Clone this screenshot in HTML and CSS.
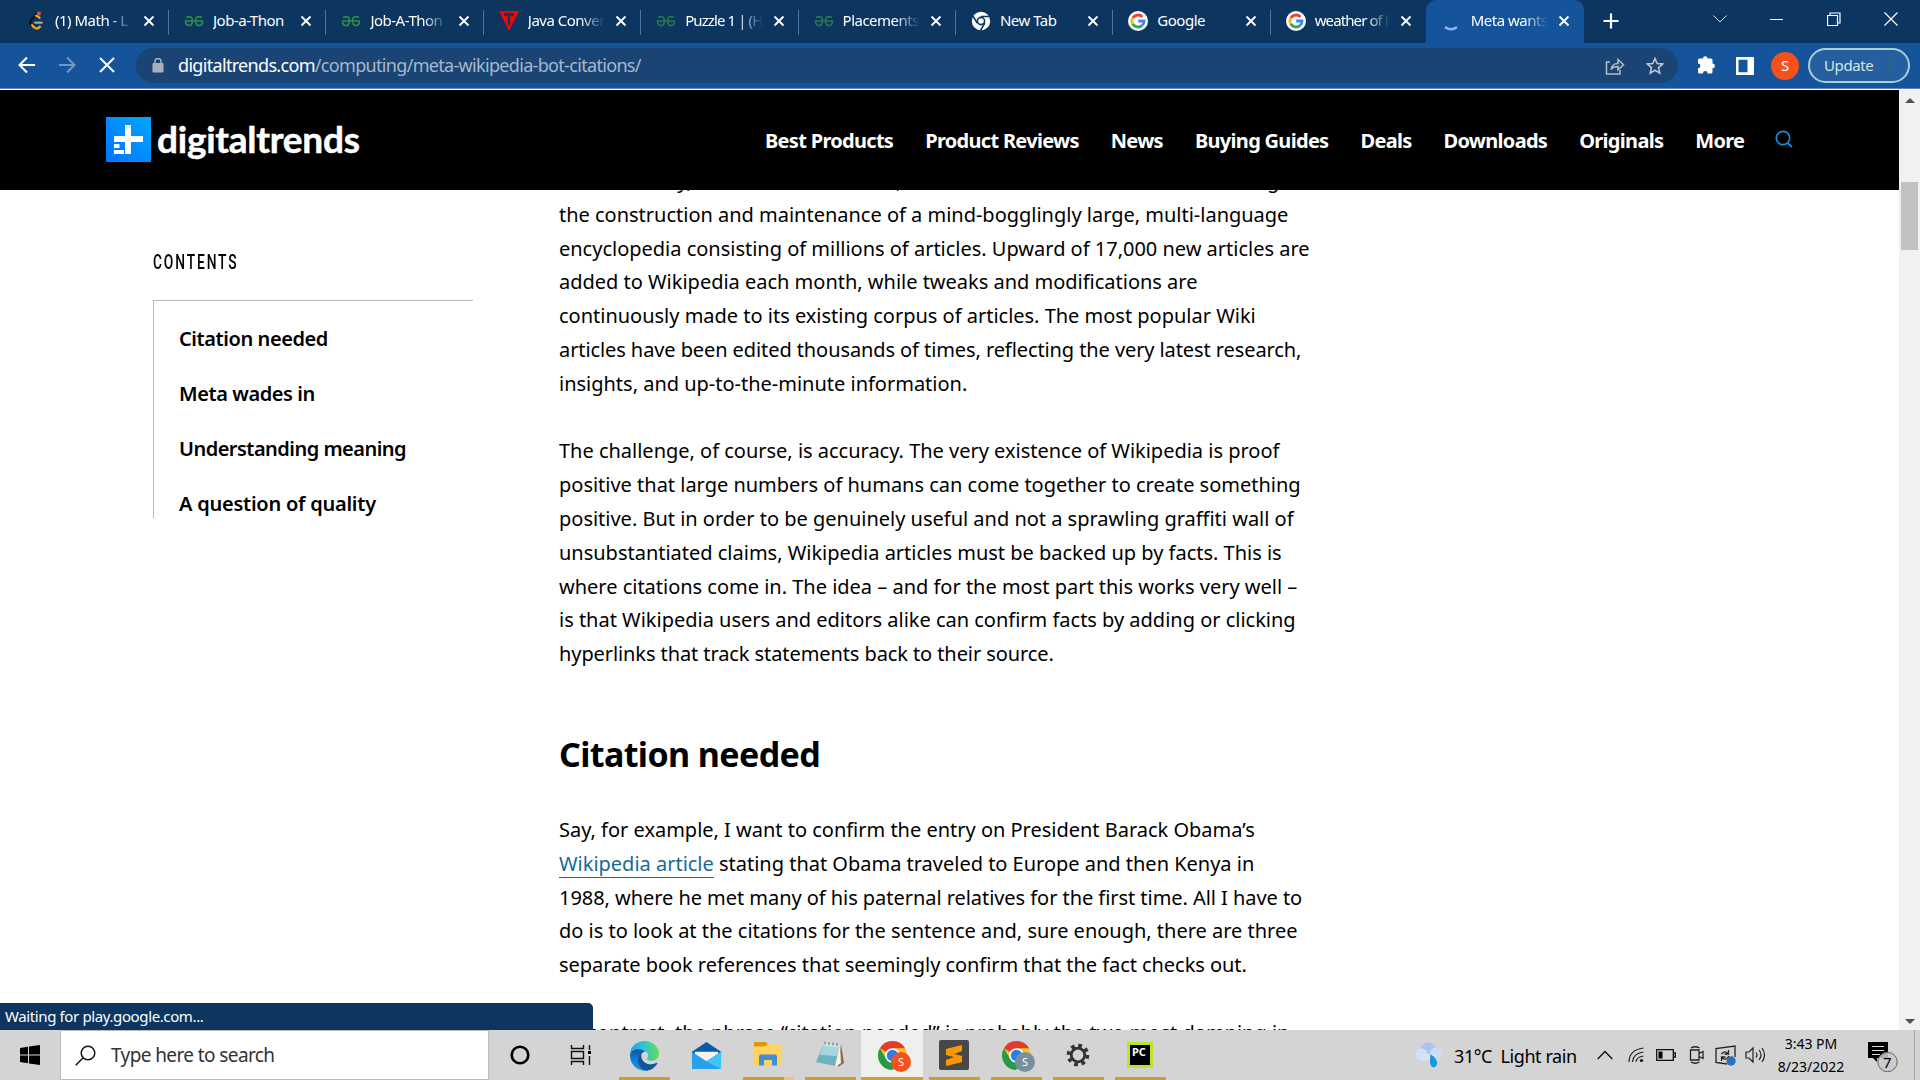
FILE: index.html
```html
<!DOCTYPE html>
<html lang="en">
<head>
<meta charset="utf-8">
<title>Meta wants</title>
<link rel="stylesheet" href="styles.css">
</head>
<body>
<svg width="0" height="0" class="defs" aria-hidden="true">
  <defs>
    <symbol id="close" viewBox="0 0 12 12"><path d="M1.500 1.500l9 9M10.500 1.500l-9 9" stroke="#fff" stroke-width="1.900" fill="none"/></symbol>
    <symbol id="gfg" viewBox="0 0 20 12"><path d="M1 6h18M2 2.600Q8.500-.5 8.500 6 8 11 4.500 10.500 1.500 10 1.500 6M18 2.600Q11.500-.5 11.500 6 12 11 15.500 10.500 18.500 10 18.500 6" stroke="#2f8d46" stroke-width="1.700" fill="none"/></symbol>
    <symbol id="google" viewBox="0 0 20 20"><circle cx="10" cy="10" r="10" fill="#fff"/><g fill="none" stroke-width="2.900"><path d="M14.300 5.900A6 6 0 0 0 4.800 7" stroke="#ea4335"/><path d="M4.800 7a6 6 0 0 0 0 6" stroke="#fbbc05"/><path d="M4.800 13a6 6 0 0 0 9.200 1.500" stroke="#34a853"/><path d="M14 14.500A6 6 0 0 0 16 10H10.200" stroke="#4285f4"/></g></symbol>
    <symbol id="chrome" viewBox="0 0 32 32"><circle cx="16" cy="16" r="15" fill="#fbc02d"/><path d="M16 16L3 8.500A15 15 0 0 1 29 8.500H16z" fill="#e33b2e"/><path d="M16 16L9.500 19.700 3 8.500A15 15 0 0 0 15.500 31L22.500 19.800z" fill="#249b48"/><circle cx="16" cy="16" r="7.600" fill="#fff"/><circle cx="16" cy="16" r="5.900" fill="#2f7de1"/></symbol>
  </defs>
</svg>

<div class="screen">
  <header class="tabs">
    <div class="tab first"><svg class="fav" viewBox="0 0 20 24"><path d="M12 2L4 11q-2 3 0 6l2 2" stroke="#111" stroke-width="2.600" fill="none"/><path d="M9 6q3-1 6 3M4.500 16q6 9 11 2" stroke="#f5a623" stroke-width="2.600" fill="none"/><path d="M8 14h10" stroke="#b5b5b5" stroke-width="2.400"/><circle cx="13.500" cy="3" r="2.500" fill="#dd4d4d"/></svg><span class="name fade">(1) Math - L</span><svg class="x"><use href="#close"/></svg></div>
    <div class="tab"><svg class="fav"><use href="#gfg"/></svg><span class="name">Job-a-Thon</span><svg class="x"><use href="#close"/></svg></div>
    <div class="tab"><svg class="fav"><use href="#gfg"/></svg><span class="name fade">Job-A-Thon</span><svg class="x"><use href="#close"/></svg></div>
    <div class="tab"><svg class="fav" viewBox="0 0 20 20"><path d="M0 0h20L10 20z" fill="#f00"/><path d="M5 3.500h10M10 3v11" stroke="#0c3560" stroke-width="2.400"/></svg><span class="name fade">Java Conver</span><svg class="x"><use href="#close"/></svg></div>
    <div class="tab"><svg class="fav dim"><use href="#gfg"/></svg><span class="name fade tight">Puzzle 1 | (H</span><svg class="x"><use href="#close"/></svg></div>
    <div class="tab"><svg class="fav dim"><use href="#gfg"/></svg><span class="name fade">Placements</span><svg class="x"><use href="#close"/></svg></div>
    <div class="tab"><svg class="fav" viewBox="0 0 20 20"><circle cx="10" cy="10" r="9.200" fill="#fff"/><circle cx="10" cy="10" r="3.600" fill="#fff" stroke="#0c3560" stroke-width="1.600"/><path d="M10 5.600h8.500M6.200 12.200L2 5M13.800 12.200L9.500 19.500" stroke="#0c3560" stroke-width="1.500"/></svg><span class="name">New Tab</span><svg class="x"><use href="#close"/></svg></div>
    <div class="tab"><svg class="fav"><use href="#google"/></svg><span class="name">Google</span><svg class="x"><use href="#close"/></svg></div>
    <div class="tab nosep"><svg class="fav"><use href="#google"/></svg><span class="name fade tight">weather of k</span><svg class="x"><use href="#close"/></svg></div>
    <div class="tab active"><svg class="fav" viewBox="0 0 20 20"><path d="M3 16q6 4.500 12 0" stroke="#8ab4f8" stroke-width="2.400" fill="none"/></svg><span class="name fade">Meta wants</span><svg class="x"><use href="#close"/></svg></div>
    <svg class="plus" viewBox="0 0 16 16"><path d="M8 .5v15M.5 8h15" stroke="#fff" stroke-width="2.200"/></svg>
    <div class="winctl">
      <svg width="14" height="8" viewBox="0 0 14 8"><path d="M.5.500L7 7 13.500.500" stroke="#dce5ee" fill="none"/></svg>
      <svg width="14" height="14" viewBox="0 0 14 14"><path d="M0 7.500h13" stroke="#fff" fill="none"/></svg>
      <svg width="14" height="14" viewBox="0 0 14 14"><path d="M.5 3.500h10v10h-10zM3 3V1h10v10h-2" stroke="#fff" fill="none" stroke-width="1.200"/></svg>
      <svg width="14" height="14" viewBox="0 0 14 14"><path d="M.5.500l13 13M13.500.500l-13 13" stroke="#fff" fill="none" stroke-width="1.200"/></svg>
    </div>
  </header>

  <nav class="toolbar">
    <svg class="tb back" viewBox="0 0 18 18"><path d="M17 9H2M9 1.500L1.500 9 9 16.500" stroke="#fff" stroke-width="2" fill="none"/></svg>
    <svg class="tb" viewBox="0 0 18 18"><path d="M1 9h15M9 1.500L16.500 9 9 16.500" stroke="#7197c2" stroke-width="2" fill="none"/></svg>
    <svg class="tb" viewBox="0 0 18 18"><path d="M2 2l14 14M16 2L2 16" stroke="#fff" stroke-width="2" fill="none"/></svg>
    <div class="omni">
      <svg class="lock" width="12" height="15" viewBox="0 0 12 15"><rect x=".5" y="5" width="11" height="9.500" rx="1.200" fill="#a9b1ba"/><path d="M3 6V3.500a3 3 0 0 1 6 0V6" stroke="#a9b1ba" stroke-width="1.500" fill="none"/></svg>
      <span class="url">digitaltrends.com<i>/computing/meta-wikipedia-bot-citations/</i></span>
      <svg class="share" width="20" height="18" viewBox="0 0 20 18"><path d="M5 5H1.500v12H15v-4M6 12.500q1-6 7-6V2.500l5.500 5.200-5.500 5V9.500q-5 0-7 3z" stroke="#b6bfc9" stroke-width="1.500" fill="none"/></svg>
      <svg width="18" height="18" viewBox="0 0 18 18"><path d="M9 1.500l2.200 5.100 5.500.4-4.200 3.600 1.300 5.500L9 13.200l-4.800 2.900 1.300-5.500L1.300 7l5.500-.4z" stroke="#c0c6cd" stroke-width="1.600" fill="none"/></svg>
    </div>
    <svg class="ext" width="19" height="19" viewBox="0 0 19 19"><path d="M1 5q0-1.500 1.500-1.500H6a2.300 2.300 0 1 1 4.600 0H14Q15.500 3.500 15.500 5v3.500a2.400 2.400 0 1 1 0 4.800V17q0 1.500-1.500 1.500h-3.300a2.300 2.300 0 1 0-4.800 0H2.500Q1 18.500 1 17v-3.700a2.400 2.400 0 1 0 0-4.800z" fill="#fff"/></svg>
    <svg class="panel" width="18" height="18" viewBox="0 0 18 18"><path d="M0 0h18v18H0zM2.500 2.700v12.600h9V2.700z" fill="#fff" fill-rule="evenodd"/></svg>
    <span class="avatar">S</span>
    <span class="update">Update<b></b></span>
  </nav>

  <main class="viewport">
    <div class="page">
      <div class="sitebar">
        <svg class="mark" viewBox="0 0 45 45"><defs><linearGradient id="dt" x1="0" y1="1" x2="1" y2="0"><stop offset="0" stop-color="#0073ff"/><stop offset="1" stop-color="#00a8ff"/></linearGradient></defs><path d="M0 0h45v45H0z" fill="url(#dt)"/><path d="M19 8h6v11h12v6H25v12h-6V25H8v-6h11zM8 27h5.500v4H8zM8 33h10v4H8z" fill="#fff"/></svg>
        <span class="brand">digitaltrends</span>
        <div class="menu"><a>Best Products</a><a>Product Reviews</a><a>News</a><a>Buying Guides</a><a>Deals</a><a>Downloads</a><a>Originals</a><a>More</a></div>
        <svg class="find" viewBox="0 0 18 18"><circle cx="8" cy="8" r="6.700" stroke="#1090d8" stroke-width="1.700" fill="none"/><path d="M12.500 13l4.500 4" stroke="#1090d8" stroke-width="1.700"/></svg>
      </div>
      <div class="columns">
        <aside class="toc">
          <h4>CONTENTS</h4>
          <ul><li>Citation needed</li><li>Meta wades in</li><li>Understanding meaning</li><li>A question of quality</li></ul>
        </aside>
        <article>
          <p class="lead"><span class="snug">More recently, a few thousand users, who write it online had been overseeing</span><br>the construction and maintenance of a mind-bogglingly large, multi-language<br>encyclopedia consisting of millions of articles. Upward of 17,000 new articles are<br>added to Wikipedia each month, while tweaks and modifications are<br>continuously made to its existing corpus of articles. The most popular Wiki<br><span class="snug">articles have been edited thousands of times, reflecting the very latest research,</span><br>insights, and up-to-the-minute information.</p>
          <p>The challenge, of course, is accuracy. The very existence of Wikipedia is proof<br>positive that large numbers of humans can come together to create something<br>positive. But in order to be genuinely useful and not a sprawling graffiti wall of<br>unsubstantiated claims, Wikipedia articles must be backed up by facts. This is<br>where citations come in. The idea – and for the most part this works very well –<br>is that Wikipedia users and editors alike can confirm facts by adding or clicking<br><span class="snug">hyperlinks that track statements back to their source.</span></p>
          <h2>Citation needed</h2>
          <p>Say, for example, I want to confirm the entry on President Barack Obama’s<br><a class="link">Wikipedia article</a> stating that Obama traveled to Europe and then Kenya in<br><span class="trim">1988, where he met many of his paternal relatives for the first time. All I have to</span><br>do is to look at the citations for the sentence and, sure enough, there are three<br><span class="trim">separate book references that seemingly confirm that the fact checks out.</span></p>
          <p>By contrast, the phrase “citation needed” is probably the two most damning in</p>
        </article>
      </div>
    </div>
    <div class="scroll"><i class="up"></i><b></b><i class="down"></i></div>
    <div class="status">Waiting for play.google.com...</div>
  </main>

  <footer class="taskbar">
    <div class="start"><svg width="20" height="20" viewBox="0 0 20 20"><path d="M0 3l8-1.200V9.500H0zM9 1.600L20 0v9.500H9zM0 10.500h8v7.700L0 17zM9 10.500h11V20L9 18.400z"/></svg></div>
    <div class="search"><svg width="21" height="21" viewBox="0 0 21 21"><circle cx="13" cy="8" r="6.800" stroke="#111" stroke-width="1.500" fill="none"/><path d="M8.200 12.800L.7 20.300" stroke="#111" stroke-width="1.500"/></svg>Type here to search</div>
    <div class="cell c1"><svg width="20" height="20" viewBox="0 0 20 20"><circle cx="10" cy="10" r="8.300" stroke="#000" stroke-width="2.600" fill="none"/></svg></div>
    <div class="cell c2"><svg width="22" height="20" viewBox="0 0 22 20"><path d="M1.500 0v3.500h12V0M1.500 20v-3.500h12V20M1.500 6.500h12v7h-12zM19.500 0v5M19.500 11v9" stroke="#111" stroke-width="1.400" fill="none"/><path d="M18 6h3v3h-3z"/></svg></div>
    <div class="cell open"><svg width="31" height="31" viewBox="0 0 32 32"><defs><linearGradient id="e1"><stop stop-color="#1ba8e8"/><stop offset=".45" stop-color="#2fc3d6"/><stop offset="1" stop-color="#62dd54"/></linearGradient><linearGradient id="e2" x2="0" y2="1"><stop stop-color="#0f4f94"/><stop offset=".4" stop-color="#0c78d4"/><stop offset="1" stop-color="#1b9de2"/></linearGradient></defs><path d="M1 14C2 6 8 1 16 1s15 6 15 13c0 5-4 7.500-8 7.500-3 0-4.500-1-4.500-2.200 0-1 1.300-1.300 1.300-3.300 0-3-2.800-4.500-5.300-4.500C9 9.500 3 10 1 14z" fill="url(#e1)"/><path d="M1 16c0-4 4-6.500 8-6.500 4.500 0 6.500 1.500 7.500 2.500-3 0-5.500 3-5.500 7 0 6 4.500 11 9 12.400C10 33.500 1 26 1 16z" fill="url(#e2)"/><path d="M15 12.200c-2 1.300-3 3.300-2 6.300 1.500 4.500 5.500 6.500 9.500 6.500 3.500 0 5.300-1.500 6.500-1.500.7 0 0 1.500-1 2.500-2.500 3-5.500 5.400-9 5.500-7 0-11-7-9.500-13 .8-3.500 3-6 5.500-6.300z" fill="#12539b"/></svg></div>
    <div class="cell"><svg width="31" height="31" viewBox="0 0 32 32"><path d="M1 12L16 2l15 10v8H1z" fill="#0b5aa5"/><path d="M4 12h24v7L16 25 4 19z" fill="#f4f4f4"/><path d="M1 12l15 10L31 12v18H1z" fill="#2aa0e8"/><path d="M31 12L16 22l15 8z" fill="#3fc6f8"/></svg></div>
    <div class="cell open split"><svg width="30" height="30" viewBox="0 0 30 30"><path d="M1 3q0-1 1-1h11l2 3h-2l-1 3H1z" fill="#dc9a06"/><path d="M1 6.500h12l2-2h13v20.500H1z" fill="#ffd35c"/><path d="M6 25.500V16.500q0-2 2-2h14q2 0 2 2v9h-5v-5.500h-8v5.500z" fill="#3d8fd8"/></svg></div>
    <div class="cell open"><svg width="30" height="30" viewBox="0 0 30 30"><path d="M26 4l3 19-6 4z" fill="#8b6a3f"/><path d="M9 3l16 2-5 21-19-4z" fill="#6fb2bf"/><path d="M9 3l16 2-3 11-17-1z" fill="#a5d6dd"/><path d="M9 2.500l16 2-1 3L8 5.500z" fill="#d8e6e8"/><path d="M25 5l1 18-6 4z" fill="#f7f4e9"/><path d="M10 1.500v3M14 2v3M18 2.500v3M22 3v3" stroke="#666"/></svg></div>
    <div class="cell open current"><svg width="31" height="31"><use href="#chrome"/></svg><span class="badge">S</span></div>
    <div class="cell open"><svg width="30" height="30" viewBox="0 0 30 30"><rect width="30" height="30" rx="2" fill="#484848"/><path d="M23 5v6l-8 3 8 2v6L7 26v-6l8-3-8-2V9z" fill="#ff9800"/></svg></div>
    <div class="cell open"><svg width="31" height="31"><use href="#chrome"/></svg><span class="badge gray">S</span></div>
    <div class="cell open"><svg width="24" height="24" viewBox="0 0 24 24"><circle cx="12" cy="12" r="6.800" fill="none" stroke="#333" stroke-width="2.800"/><circle cx="12" cy="12" r="9.500" fill="none" stroke="#333" stroke-width="3.600" stroke-dasharray="3.730 3.730"/></svg></div>
    <div class="cell open"><span class="pc">PC</span></div>
    <div class="tray">
      <svg class="rain" width="28" height="26" viewBox="0 0 28 26"><circle cx="13" cy="8" r="7.500" fill="#a8c5f0"/><circle cx="6.500" cy="12.500" r="6" fill="#d3e1f6"/><circle cx="21" cy="12" r="6.500" fill="#cbdcf5"/><path d="M6 12h15v6.500H6z" fill="#d7e4f7"/><path d="M15.500 12q7.500 5 6.500 10.500-1.500 3.500-5 2.500-3-2-1.500-13z" fill="#1897dc"/></svg>
      <span class="weather">31°C&nbsp; Light rain</span>
      <svg class="chev" width="16" height="10" viewBox="0 0 16 10"><path d="M.7 9L8 1.500 15.300 9" stroke="#111" stroke-width="1.400" fill="none"/></svg>
      <svg class="wifi" width="16" height="16" viewBox="0 0 16 16"><g fill="none" stroke="#222" stroke-width="1.200"><path d="M1 15Q1 3 15.500 1M4.500 15Q5 6.500 15.500 5M8 15q.5-5 7.500-6"/></g><circle cx="13.500" cy="13.500" r="1.600"/></svg>
      <svg class="batt" width="20" height="12" viewBox="0 0 20 12"><path d="M.7.700h16.600v10.600H.7zM18 4h1.300v4H18" fill="none" stroke="#111" stroke-width="1.300"/><path d="M2.500 2.500h4v7h-4z"/></svg>
      <svg class="meet" width="15" height="18" viewBox="0 0 15 18"><path d="M1.500 4h8.500v10H1.500zM10 7.500l4-2v7l-4-2M2 2Q6-.5 10.500 2M2 16q4 2.500 8.500 0" fill="none" stroke="#222" stroke-width="1.300"/></svg>
      <svg class="sync" width="21" height="21" viewBox="0 0 21 21"><path d="M12 19L1 17.500v-14L20 1v11M6.500 9q3-4 6.500-.5M13.500 5v4h-4M14 11q-3 5-7 2M6.500 16v-4h4" fill="none" stroke="#222" stroke-width="1.300"/><circle cx="16" cy="16" r="4.700" fill="#2f70b9"/></svg>
      <svg class="vol" width="21" height="18" viewBox="0 0 21 18"><path d="M1 6h3l4-4v14l-4-4H1zM11 6.500q2 2.500 0 5M14 4q4 5 0 10M17 2q5 7 0 14" fill="none" stroke="#222" stroke-width="1.200"/></svg>
      <div class="clock"><span>3:43 PM</span><span>8/23/2022</span></div>
      <div class="note"><svg width="30" height="32" viewBox="0 0 30 32"><path d="M0 1h20v16H9v4L5 17H0z"/><path d="M4 5.500h12M4 9.500h12M4 13.500h8" stroke="#ddd" stroke-width="1.200"/><circle cx="19.500" cy="21" r="9.700" fill="#c9c9c9" fill-opacity=".88" stroke="#666"/></svg><span>7</span></div>
    </div>
  </footer>
</div>
</body>
</html>
```
FILE: styles.css
```css
* { box-sizing: border-box; }
body { margin: 0; font-family: "Noto Sans", "Open Sans", sans-serif; color: #000; background: #fff; overflow: hidden; }
.defs { position: absolute; }
svg { flex: none; display: block; }
.screen { width: 1920px; height: 1080px; display: flex; flex-direction: column; overflow: hidden; }

.tabs { height: 43px; flex: none; background: #0c3560; display: flex; color: #fff; }
.tab { width: 157.4px; height: 43px; flex: none; display: flex; align-items: center; padding: 0 14px 2px 15px; position: relative; }
.tab.first { width: 169px; padding-left: 26px; }
.tab::after { content: ""; position: absolute; right: 0; top: 10px; width: 1px; height: 25px; background: #557397; }
.tab.nosep::after, .tab.active::after { display: none; }
.fav { width: 20px; height: 20px; margin-right: 9px; }
.dim { opacity: .75; }
.name { width: 79px; font-size: 15px; letter-spacing: -.5px; white-space: nowrap; overflow: hidden; margin-right: 10px; line-height: 24px; padding-bottom: 1px; }
.name.tight { letter-spacing: -.9px; }
.fade { -webkit-mask-image: linear-gradient(90deg, #000 68%, transparent); mask-image: linear-gradient(90deg, #000 68%, transparent); }
.x { width: 12px; height: 12px; }
.tab.nosep { width: 155px; }
.tab.active { background: #15539b; border-radius: 10px 10px 0 0; width: 158px; padding-left: 16px; }
.plus { width: 16px; height: 16px; margin: 13px 0 0 19px; }
.winctl { display: flex; gap: 43px; margin-left: auto; padding-right: 22px; height: 38px; align-items: center; }

.toolbar { height: 46px; flex: none; background: #15539b; border-bottom: 1px solid #5d87b9; display: flex; align-items: center; }
.tb { width: 18px; height: 18px; margin-right: 22px; margin-bottom: 2px; }
.back { margin-left: 18px; }
.omni { width: 1542px; height: 35px; border-radius: 18px; background: #194473; display: flex; align-items: center; padding: 0 14px 0 16px; margin-left: -2px; }
.url { margin: 0 auto 0 14px; color: #fff; font-size: 18px; letter-spacing: -.68px; line-height: 30px; padding-bottom: 1px; }
.url i { font-style: normal; color: #a6b8cc; }
.share { margin-right: 21px; }
.ext { margin-left: 19px; margin-bottom: 2px; }
.panel { margin-left: 20px; }
.avatar { width: 28px; height: 28px; border-radius: 50%; background: #f4511e; color: #fff; font-size: 15px; line-height: 27px; text-align: center; margin-left: 17px; }
.update { width: 102px; height: 35px; border: 2px solid #a9cfd0; border-radius: 18px; background: #265e9f; color: #cfe8e1; font-size: 15px; display: flex; align-items: center; justify-content: space-between; padding: 0 16px 2px 14px; margin-left: 9px; letter-spacing: -.4px; }
.update b { width: 3px; height: 3px; border-radius: 50%; background: #188038; box-shadow: 0 6px #188038, 0 -6px #188038; }

.viewport { height: 941px; flex: none; display: flex; position: relative; overflow: hidden; padding-top: 1px; }
.page { width: 1899px; height: 940px; flex: none; overflow: hidden; }
.sitebar { height: 100px; background: #000; display: flex; align-items: center; padding-left: 106px; position: relative; z-index: 1; }
.mark { width: 45px; height: 45px; margin-bottom: 2px; }
.brand { font-family: Lato, sans-serif; font-weight: 700; font-size: 37px; letter-spacing: -.25px; color: #fff; -webkit-text-stroke: .5px #fff; margin-left: 6px; width: 203px; line-height: 50px; padding-bottom: 2px; white-space: nowrap; }
.menu { display: flex; margin-left: 405px; gap: 32px; color: #fff; font-weight: 700; font-size: 20px; letter-spacing: -.7px; white-space: nowrap; width: 980px; }
.find { width: 18px; height: 18px; margin-left: 30px; margin-bottom: 3px; }
.columns { display: flex; padding-left: 153px; }
.toc { width: 320px; flex: none; margin-right: 86px; padding-top: 58px; }
h4 { margin: 0; font-family: Roboto, sans-serif; font-weight: 500; font-size: 20px; line-height: 28px; letter-spacing: 2.7px; transform: scaleX(.69); transform-origin: left; }
.toc ul { list-style: none; margin: 24px 0 0; padding: 10px 0 0 25px; border-left: 1px solid #b9b9b9; border-top: 1px solid #b9b9b9; height: 218px; }
.toc li { height: 55px; line-height: 55px; font-size: 20px; font-weight: 600; letter-spacing: -.42px; }
.toc li:nth-child(3) { letter-spacing: -.52px; }
.toc li:nth-child(4) { letter-spacing: -.24px; }
article { width: 780px; font-size: 20px; line-height: 33.8px; white-space: nowrap; letter-spacing: -.01px; }
p { margin: 0 0 33.8px; }
.lead { margin-top: -26px; }
.snug { letter-spacing: -.09px; }
.trim { letter-spacing: -.05px; }
h2 { margin: 59px 0 35px; font-size: 34px; line-height: 48px; font-weight: 700; letter-spacing: -.6px; }
.link { color: #186a94; border-bottom: 1px solid #186a94; }
.scroll { width: 21px; background: #f1f1f1; display: flex; flex-direction: column; align-items: center; padding: 8px 0 6px; }
.scroll i { border: 5px solid transparent; }
.scroll .up { border-top: 0; border-bottom-color: #505050; }
.scroll .down { border-bottom: 0; border-top-color: #505050; margin-top: auto; }
.scroll b { width: 17px; height: 68px; background: #c1c1c1; margin-top: 79px; }
.status { position: absolute; left: 0; bottom: 0; width: 593px; height: 27px; background: #0c3560; color: #fff; border-top-right-radius: 5px; font-size: 15px; line-height: 26px; padding-left: 5px; letter-spacing: -.38px; z-index: 2; }

.taskbar { height: 50px; flex: none; background: #d4d4d4; display: flex; }
.start { width: 60px; display: grid; place-items: center; flex: none; }
.search { width: 429px; flex: none; background: #fff; border: 1px solid #bbb; display: flex; align-items: center; gap: 15px; padding-left: 14px; font-size: 19px; color: #333; letter-spacing: -.6px; }
.cell { width: 62px; display: grid; place-items: center; position: relative; flex: none; }
.c2 { padding-right: 3px; }
.open::after { content: ""; position: absolute; left: 6px; right: 5px; bottom: 0; height: 3px; background: #cca129; }
.split::after { background: linear-gradient(90deg, #cca129 81%, #e4c77e 81%); }
.current { background: #efefef; }
.current::after { left: 0; right: 0; }
.badge { position: absolute; left: 30px; top: 22px; width: 20px; height: 20px; border-radius: 50%; background: #f4511e; color: #fff; font-size: 11px; line-height: 20px; text-align: center; }
.gray { background: #78909c; }
.pc { width: 26px; height: 26px; background: #000; border: 3px solid #b8e52c; color: #fff; font-size: 11px; line-height: 13px; font-weight: 700; padding-left: 2px; }
.tray { margin-left: auto; width: 505px; display: flex; align-items: center; flex: none; }
.weather { font-size: 18px; letter-spacing: -.42px; margin-left: 11px; white-space: nowrap; width: 122px; padding-top: 2px; }
.chev { margin-left: 21px; }
.wifi { margin-left: 15px; }
.batt { margin-left: 12px; }
.meet { margin-left: 13px; }
.sync { margin-left: 11px; }
.vol { margin-left: 9px; }
.clock { display: flex; flex-direction: column; text-align: center; font-size: 14px; line-height: 23px; width: 80px; margin-left: 5px; }
.note { position: relative; width: 46px; height: 32px; margin: 4px 0 0 17px; flex: none; }
.note span { position: absolute; left: 15px; top: 11px; font-size: 15px; line-height: 20px; }
.tray::after { content: ""; width: 1px; height: 50px; background: #aaa; }
```
